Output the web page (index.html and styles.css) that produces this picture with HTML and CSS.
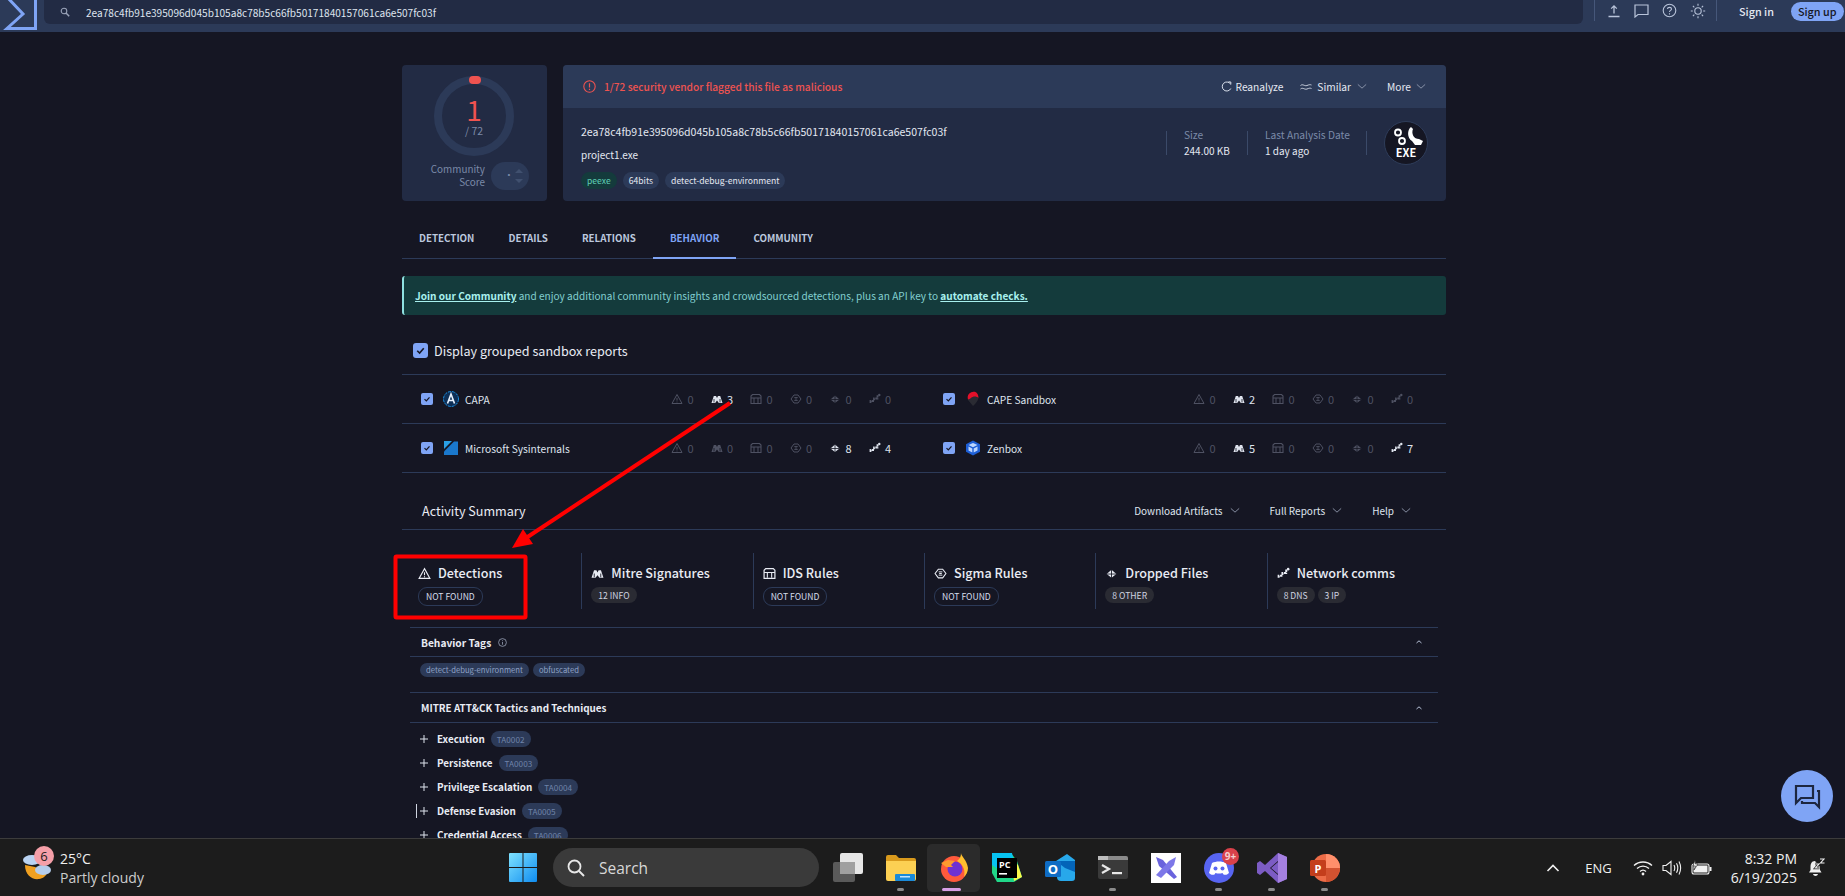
FILE: index.html
```html
<!DOCTYPE html>
<html lang="en">
<head>
<meta charset="utf-8">
<title>VirusTotal - File - 2ea78c4fb91e395096d045b105a8c78b5c66fb50171840157061ca6e507fc03f</title>
<link rel="stylesheet" href="styles.css">
</head>
<body>
<svg class="defs" width="0" height="0">
  <symbol id="i-warn" viewBox="0 0 12 12"><path d="M6 1.500 11 10.500H1Z M6 4.800V7.600 M6 8.600V9.400" fill="none" stroke="currentColor" stroke-width="1"/></symbol>
  <symbol id="i-mitre" viewBox="0 0 12 12"><path d="M.5 10 2.800 3H5L6 5 7 3H9.200L11.500 10H7.800L6 7.500 4.200 10Z" fill="currentColor"/><path d="M3 6V9.500M9 6V9.500" stroke="#151623" stroke-width=".8"/></symbol>
  <symbol id="i-ids" viewBox="0 0 12 12"><path d="M2.500 1.500H9.500L11 3V10.500H1V3Z" fill="none" stroke="currentColor" stroke-width="1.100"/><path d="M1 5H11M4 5V10M8 5V10" stroke="currentColor" stroke-width="1"/></symbol>
  <symbol id="i-sigma" viewBox="0 0 12 12"><path d="M4 2H8L11 6 8 10H4L1 6Z" fill="none" stroke="currentColor" stroke-width="1"/><path d="M4.300 4.500H7.700M4.800 6H7.200M4.300 7.500H7.700" stroke="currentColor" stroke-width=".9"/></symbol>
  <symbol id="i-drop" viewBox="0 0 12 12"><path d="M6 2.500 10.500 6.500 6 10 1.500 6.500Z" fill="currentColor"/><path d="M6 .8V11.300M1.500 6.500H10.500" stroke="#151623" stroke-width=".8"/></symbol>
  <symbol id="i-net" viewBox="0 0 12 12"><path d="M1.500 10V8H5V5.500H8.500V3.200H10" fill="none" stroke="currentColor" stroke-width="1.800" stroke-dasharray="2.400 .7"/><circle cx="10.300" cy="2" r="1.200" fill="currentColor"/></symbol>
  <symbol id="i-check" viewBox="0 0 12 12"><path d="M3 6.200 5.200 8.300 9 4" fill="none" stroke="#151623" stroke-width="1.500"/></symbol>
  <symbol id="i-down" viewBox="0 0 12 8"><path d="M1 1.500 6 6 11 1.500" fill="none" stroke="currentColor" stroke-width="1"/></symbol>
  <symbol id="i-plus" viewBox="0 0 10 10"><path d="M5 1V9M1 5H9" stroke="currentColor" stroke-width="1"/></symbol>
  <symbol id="i-up" viewBox="0 0 8 6"><path d="M1.500 4 4 1.800 6.500 4" fill="none" stroke="currentColor" stroke-width="1"/></symbol>
</svg>

<header class="topbar">
  <a class="logo" href="#"><svg width="37" height="32" viewBox="0 0 37 32"><path d="M7 -3 23 14 7 28.500H35.500V-3" fill="none" stroke="#7fa4f5" stroke-width="3"/></svg></a>
  <div class="search">
    <svg class="search-icon" width="10" height="10" viewBox="0 0 10 10"><circle cx="4" cy="4" r="2.800" fill="none" stroke="#9aa3b8" stroke-width="1.100"/><path d="M6 6 9.200 9.200" stroke="#9aa3b8" stroke-width="1.500"/></svg>
    <span>2ea78c4fb91e395096d045b105a8c78b5c66fb50171840157061ca6e507fc03f</span>
  </div>
  <div class="tools">
    <svg width="14" height="14" viewBox="0 0 14 14"><path d="M7 9.500V2M4.200 4.600 7 1.800 9.800 4.600M1.500 12.500H12.500" fill="none" stroke="#b9c4da" stroke-width="1.300"/></svg>
    <svg width="15" height="14" viewBox="0 0 15 14"><path d="M1 1H14V10.500H4L1 13Z" fill="none" stroke="#b9c4da" stroke-width="1.200"/></svg>
    <svg width="15" height="15" viewBox="0 0 15 15"><circle cx="7.500" cy="7.500" r="6.300" fill="none" stroke="#b9c4da" stroke-width="1.100"/><path d="M5.500 6C5.500 3.800 9.500 3.800 9.500 6 9.500 7.500 7.500 7.300 7.500 9M7.500 10.300V11.400" fill="none" stroke="#b9c4da" stroke-width="1.100"/></svg>
    <svg width="16" height="16" viewBox="0 0 16 16"><circle cx="8" cy="8" r="3.200" fill="none" stroke="#b9c4da" stroke-width="1.100"/><path d="M8 .8V2.800M8 13.200V15.200M.8 8H2.800M13.200 8H15.200M2.900 2.900 4.300 4.300M11.700 11.700 13.100 13.100M2.900 13.100 4.300 11.700M11.700 4.300 13.100 2.900" stroke="#b9c4da" stroke-width="1.100"/></svg>
  </div>
  <a class="sign-in" href="#">Sign in</a>
  <a class="sign-up" href="#">Sign up</a>
</header>

<main class="page">
  <div class="wrap">
    <section class="file-head">
      <div class="score-card">
        <div class="ring">
          <span class="ring-dot"></span>
          <span class="ring-num">1</span>
          <span class="ring-total">/ 72</span>
        </div>
        <div class="community">
          <span>Community<br>Score</span>
          <div class="vote">
            <span class="vote-dot">·</span>
            <svg width="10" height="20" viewBox="0 0 10 20"><path d="M1 7 5 3 9 7Z M1 13 5 17 9 13Z" fill="#40506f"/></svg>
          </div>
        </div>
      </div>
      <div class="info-card">
        <div class="info-top">
          <svg width="13" height="13" viewBox="0 0 13 13"><circle cx="6.500" cy="6.500" r="5.700" fill="none" stroke="#ef5350" stroke-width="1.100"/><path d="M6.500 3.200V7.500M6.500 8.700V9.900" stroke="#ef5350" stroke-width="1.200"/></svg>
          <span class="alert-text">1/72 security vendor flagged this file as malicious</span>
          <div class="actions">
            <span class="action"><svg width="11" height="11" viewBox="0 0 11 11"><path d="M9.500 3A4.500 4.500 0 1 0 9.800 7.500" fill="none" stroke="#d8deea" stroke-width="1"/><path d="M7.500 .8 9.800 1V3.500" fill="none" stroke="#d8deea" stroke-width="1"/></svg>Reanalyze</span>
            <span class="action action-similar"><svg width="12" height="8" viewBox="0 0 12 8"><path d="M.5 2.500C3 .5 4.500 3.500 7 2.500S10 1.500 11.500 2M.5 6C3 4 4.500 7 7 6S10 5 11.500 5.500" fill="none" stroke="#d8deea" stroke-width=".9"/></svg>Similar<svg class="chev" width="10" height="7"><use href="#i-down"/></svg></span>
            <span class="action">More<svg class="chev" width="10" height="7"><use href="#i-down"/></svg></span>
          </div>
        </div>
        <div class="info-body">
          <div class="file-id">
            <div class="hash">2ea78c4fb91e395096d045b105a8c78b5c66fb50171840157061ca6e507fc03f</div>
            <div class="filename">project1.exe</div>
            <div class="file-tags">
              <span class="tag tag-green">peexe</span>
              <span class="tag">64bits</span>
              <span class="tag">detect-debug-environment</span>
            </div>
          </div>
          <div class="meta meta-size"><span class="meta-label">Size</span><span class="meta-value">244.00 KB</span></div>
          <div class="meta meta-date"><span class="meta-label">Last Analysis Date</span><span class="meta-value">1 day ago</span></div>
          <div class="meta-end"></div>
          <div class="file-type">
            <svg width="44" height="44" viewBox="0 0 44 44">
              <circle cx="22" cy="22" r="21.500" fill="#151623" stroke="#2f3d5a"/>
              <circle cx="14" cy="11.500" r="3" fill="none" stroke="#fff" stroke-width="1.800"/>
              <circle cx="18" cy="20" r="3" fill="none" stroke="#fff" stroke-width="1.800"/>
              <path d="M27 6C23 9 23 17 28 20L31 24 37 24 39 20 35 18C30 18 27 13 29 8Z" fill="#fff"/>
              <text x="22" y="36" text-anchor="middle" class="exe-text">EXE</text>
            </svg>
          </div>
        </div>
      </div>
    </section>

    <nav class="tabs">
      <a href="#">Detection</a>
      <a href="#">Details</a>
      <a href="#">Relations</a>
      <a href="#" class="active">Behavior</a>
      <a href="#">Community</a>
    </nav>

    <div class="banner"><a href="#">Join our Community</a> and enjoy additional community insights and crowdsourced detections, plus an API key to <a href="#">automate checks.</a></div>

    <label class="group-toggle"><span class="check check-lg"><svg width="13" height="13"><use href="#i-check"/></svg></span>Display grouped sandbox reports</label>

    <div class="sandboxes">
      <div class="sandbox">
        <span class="check"><svg width="10" height="10"><use href="#i-check"/></svg></span>
        <svg class="sb-logo" width="16" height="16" viewBox="0 0 16 16"><circle cx="8" cy="8" r="7.500" fill="#0d2f57" stroke="#1b8ee0" stroke-dasharray="3 1"/><path d="M4.500 12.500 8 3 11.500 12.500M6 9.500H10" fill="none" stroke="#e8f2ff" stroke-width="1.600"/></svg>
        <span class="sb-name">CAPA</span>
        <div class="stats">
          <span class="stat"><svg><use href="#i-warn"/></svg>0</span>
          <span class="stat on"><svg><use href="#i-mitre"/></svg>3</span>
          <span class="stat"><svg><use href="#i-ids"/></svg>0</span>
          <span class="stat"><svg><use href="#i-sigma"/></svg>0</span>
          <span class="stat"><svg><use href="#i-drop"/></svg>0</span>
          <span class="stat"><svg><use href="#i-net"/></svg>0</span>
        </div>
      </div>
      <div class="sandbox">
        <span class="check"><svg width="10" height="10"><use href="#i-check"/></svg></span>
        <svg class="sb-logo" width="16" height="16" viewBox="0 0 16 16"><path d="M8 15 3 9A6 6 0 0 1 13.500 7C13 10 11 12 8 15Z" fill="#2a2b33"/><path d="M3 8.500A6 6 0 0 1 10 .8C12.500 2 13.500 4 13.500 7 11.500 5 8 5 6 7 5 7.800 4 8.200 3 8.500Z" fill="#e3102a"/></svg>
        <span class="sb-name">CAPE Sandbox</span>
        <div class="stats">
          <span class="stat"><svg><use href="#i-warn"/></svg>0</span>
          <span class="stat on"><svg><use href="#i-mitre"/></svg>2</span>
          <span class="stat"><svg><use href="#i-ids"/></svg>0</span>
          <span class="stat"><svg><use href="#i-sigma"/></svg>0</span>
          <span class="stat"><svg><use href="#i-drop"/></svg>0</span>
          <span class="stat"><svg><use href="#i-net"/></svg>0</span>
        </div>
      </div>
      <div class="sandbox">
        <span class="check"><svg width="10" height="10"><use href="#i-check"/></svg></span>
        <svg class="sb-logo" width="16" height="16" viewBox="0 0 16 16"><path d="M1 1H9L1 9Z" fill="#2aa0e6"/><path d="M11 1.500H15V15H1V11.500Z" fill="#1a78cc"/></svg>
        <span class="sb-name">Microsoft Sysinternals</span>
        <div class="stats">
          <span class="stat"><svg><use href="#i-warn"/></svg>0</span>
          <span class="stat"><svg><use href="#i-mitre"/></svg>0</span>
          <span class="stat"><svg><use href="#i-ids"/></svg>0</span>
          <span class="stat"><svg><use href="#i-sigma"/></svg>0</span>
          <span class="stat on"><svg><use href="#i-drop"/></svg>8</span>
          <span class="stat on"><svg><use href="#i-net"/></svg>4</span>
        </div>
      </div>
      <div class="sandbox">
        <span class="check"><svg width="10" height="10"><use href="#i-check"/></svg></span>
        <svg class="sb-logo" width="16" height="16" viewBox="0 0 16 16"><path d="M8 .500 15 4.200V11.800L8 15.500 1 11.800V4.200Z" fill="#1d5fd6"/><path d="M3.500 5 8 7.200 12.500 5 8 3ZM3.500 6.500 7.300 8.500V12.500L3.500 10.500ZM12.500 6.500 8.700 8.500V12.500L12.500 10.500Z" fill="#bcd6ff"/></svg>
        <span class="sb-name">Zenbox</span>
        <div class="stats">
          <span class="stat"><svg><use href="#i-warn"/></svg>0</span>
          <span class="stat on"><svg><use href="#i-mitre"/></svg>5</span>
          <span class="stat"><svg><use href="#i-ids"/></svg>0</span>
          <span class="stat"><svg><use href="#i-sigma"/></svg>0</span>
          <span class="stat"><svg><use href="#i-drop"/></svg>0</span>
          <span class="stat on"><svg><use href="#i-net"/></svg>7</span>
        </div>
      </div>
    </div>

    <div class="activity-head">
      <h2>Activity Summary</h2>
      <div class="activity-menus">
        <span>Download Artifacts<svg width="10" height="7"><use href="#i-down"/></svg></span>
        <span>Full Reports<svg width="10" height="7"><use href="#i-down"/></svg></span>
        <span>Help<svg width="10" height="7"><use href="#i-down"/></svg></span>
      </div>
    </div>

    <div class="inner">
      <div class="summary">
        <div class="sum-col">
          <h3><svg width="13" height="13"><use href="#i-warn"/></svg>Detections</h3>
          <div class="pills"><span class="pill pill-line">NOT FOUND</span></div>
        </div>
        <div class="sum-col">
          <h3><svg width="13" height="13"><use href="#i-mitre"/></svg>Mitre Signatures</h3>
          <div class="pills"><span class="pill">12 INFO</span></div>
        </div>
        <div class="sum-col">
          <h3><svg width="13" height="13"><use href="#i-ids"/></svg>IDS Rules</h3>
          <div class="pills"><span class="pill pill-line">NOT FOUND</span></div>
        </div>
        <div class="sum-col">
          <h3><svg width="13" height="13"><use href="#i-sigma"/></svg>Sigma Rules</h3>
          <div class="pills"><span class="pill pill-line">NOT FOUND</span></div>
        </div>
        <div class="sum-col">
          <h3><svg width="13" height="13"><use href="#i-drop"/></svg>Dropped Files</h3>
          <div class="pills"><span class="pill">8 OTHER</span></div>
        </div>
        <div class="sum-col">
          <h3><svg width="13" height="13"><use href="#i-net"/></svg>Network comms</h3>
          <div class="pills"><span class="pill">8 DNS</span><span class="pill">3 IP</span></div>
        </div>
      </div>

      <div class="sec-head">
        <span>Behavior Tags</span>
        <svg class="sec-info" width="9" height="9" viewBox="0 0 9 9"><circle cx="4.500" cy="4.500" r="3.900" fill="none" stroke="#9aa3b8" stroke-width=".8"/><path d="M4.500 4V6.700M4.500 2.300V3.200" stroke="#9aa3b8" stroke-width=".8"/></svg>
        <svg class="sec-up" width="8" height="6"><use href="#i-up"/></svg>
      </div>
      <div class="behav-tags">
        <span>detect-debug-environment</span>
        <span>obfuscated</span>
      </div>

      <div class="sec-head sec-mitre">
        <span>MITRE ATT&amp;CK Tactics and Techniques</span>
        <svg class="sec-up" width="8" height="6"><use href="#i-up"/></svg>
      </div>
      <ul class="tactics">
        <li><svg width="10" height="10"><use href="#i-plus"/></svg><b>Execution</b><span>TA0002</span></li>
        <li><svg width="10" height="10"><use href="#i-plus"/></svg><b>Persistence</b><span>TA0003</span></li>
        <li><svg width="10" height="10"><use href="#i-plus"/></svg><b>Privilege Escalation</b><span>TA0004</span></li>
        <li class="caret"><svg width="10" height="10"><use href="#i-plus"/></svg><b>Defense Evasion</b><span>TA0005</span></li>
        <li><svg width="10" height="10"><use href="#i-plus"/></svg><b>Credential Access</b><span>TA0006</span></li>
      </ul>
    </div>
  </div>
</main>

<footer class="taskbar">
  <div class="weather">
    <svg width="30" height="34" viewBox="0 0 30 34">
      <ellipse cx="10" cy="9" rx="9" ry="5" fill="#b9d3f2"/>
      <path d="M3 14C3 24 10 29 17 28 21 27.500 24 25 25 22L13 16Z" fill="#f0a020"/>
      <ellipse cx="21" cy="19" rx="8" ry="5" fill="#b4cdec"/>
    </svg>
    <span class="weather-badge">6</span>
    <div class="weather-text"><span>25°C</span><span class="dim">Partly cloudy</span></div>
  </div>
  <svg class="win" width="28" height="29" viewBox="0 0 28 29"><defs><linearGradient id="wg" x1="0" y1="0" x2="1" y2="1"><stop offset="0" stop-color="#7fe3ff"/><stop offset="1" stop-color="#0f8cf0"/></linearGradient></defs><path d="M0 1a1 1 0 0 1 1-1H13.500V14H0ZM14.500 0H27a1 1 0 0 1 1 1V14H14.500ZM0 15H13.500V29H1a1 1 0 0 1-1-1ZM14.500 15H28V28a1 1 0 0 1-1 1H14.500Z" fill="url(#wg)"/></svg>
  <div class="task-search">
    <svg width="20" height="20" viewBox="0 0 20 20"><circle cx="8.500" cy="8.500" r="6" fill="none" stroke="#e8e8e8" stroke-width="1.800"/><path d="M13 13 18 18" stroke="#e8e8e8" stroke-width="2"/></svg>
    <span>Search</span>
  </div>
  <div class="tasks">
    <div class="task"><svg width="30" height="29" viewBox="0 0 30 29"><rect x="0" y="9" width="22" height="20" rx="2" fill="#5a5a5a"/><rect x="7" y="0" width="23" height="21" rx="2" fill="#e6e6e6"/><rect x="7" y="9" width="15" height="12" fill="#a0a0a0"/></svg></div>
    <div class="task open"><svg width="30" height="27" viewBox="0 0 30 27"><path d="M0 3a2 2 0 0 1 2-2H10L13 4H28a2 2 0 0 1 2 2V8H0Z" fill="#d99a1c"/><path d="M0 7H30V25a2 2 0 0 1-2 2H2a2 2 0 0 1-2-2Z" fill="#fcd053"/><rect x="9" y="20" width="20" height="7" rx="1" fill="#1a8ad8"/><rect x="14" y="22" width="10" height="1.500" fill="#bfe3ff"/></svg></div>
    <div class="task active"><svg width="28" height="29" viewBox="0 0 28 29"><circle cx="14" cy="16" r="13" fill="#ff5a3c"/><path d="M21 0C21 3 27 7 28 15 28 19 26 22 24 24 26 15 21 10 17 8 20 6 21 3 21 0Z" fill="#ffc02e"/><circle cx="15" cy="16" r="7.500" fill="#6f32d2"/><path d="M1 10 8 7 15 8 11 12 13 14 6 14Z" fill="#ff9a2e"/></svg></div>
    <div class="task"><svg width="30" height="30" viewBox="0 0 30 30"><path d="M0 0H19L25 8 30 24 22 29 5 29 0 20Z" fill="#21d789"/><path d="M0 0H20L22 10 6 16 0 12Z" fill="#07c3f2"/><path d="M19 5 26 12 30 24 22 28Z" fill="#fcf84a"/><rect x="5" y="5" width="20" height="20" fill="#000"/><text x="7" y="15" class="pc-text">PC</text><rect x="7" y="20" width="8" height="1.600" fill="#fff"/></svg></div>
    <div class="task"><svg width="30" height="28" viewBox="0 0 30 28"><path d="M11 7 22 0 30 6V24a3 3 0 0 1-3 3H16a4 4 0 0 1-4-4Z" fill="#28a8ea"/><path d="M11 7H30V18L20 14Z" fill="#0364b8"/><rect x="0" y="7" width="16" height="16" rx="1.500" fill="#0f6cc4"/><text x="8" y="20" text-anchor="middle" class="o-text">O</text></svg></div>
    <div class="task open"><svg width="30" height="23" viewBox="0 0 30 23"><rect width="30" height="23" rx="2" fill="#3a3a3a"/><path d="M0 2a2 2 0 0 1 2-2H28a2 2 0 0 1 2 2V4H0Z" fill="#8a8a8a"/><rect x="0" y="0" width="10" height="4" fill="#bdbdbd"/><path d="M4 9 11 13 4 17" fill="none" stroke="#e8e8e8" stroke-width="2.200"/><rect x="14" y="16" width="10" height="2.200" fill="#e8e8e8"/></svg></div>
    <div class="task"><svg width="30" height="30" viewBox="0 0 30 30"><rect width="30" height="30" fill="#fff"/><path d="M5 4 12 7 26 24 23 26 8 13Z" fill="#6a63dd"/><path d="M25 4 23 12 10 25 5 22 18 8Z" fill="#7d77e8"/></svg></div>
    <div class="task open"><svg width="30" height="30" viewBox="0 0 30 30"><circle cx="15" cy="15" r="15" fill="#5865f2"/><path d="M8 10C12 8 18 8 22 10L25 20C23 22 21 22 19.500 21.500L18.500 20C16 20.700 14 20.700 11.500 20L10.500 21.500C9 22 7 22 5 20Z" fill="#fff"/><circle cx="11.500" cy="15.500" r="2" fill="#5865f2"/><circle cx="18.500" cy="15.500" r="2" fill="#5865f2"/></svg><span class="task-badge">9+</span></div>
    <div class="task open"><svg width="30" height="30" viewBox="0 0 30 30"><path d="M21 0 30 4V26L21 30 8 18 3 22 0 20V10L3 8 8 12Z" fill="#7c5cc4"/><path d="M21 8 13 15 21 22Z" fill="#151515"/><path d="M21 0 30 4V26L21 30Z" fill="#a580e0"/><path d="M21 9 14 15 21 21Z" fill="#7c5cc4"/></svg></div>
    <div class="task open"><svg width="30" height="28" viewBox="0 0 30 28"><circle cx="16" cy="14" r="14" fill="#ed6c47"/><path d="M16 0A14 14 0 0 1 30 14H16Z" fill="#ff8f6b"/><path d="M16 14H30A14 14 0 0 1 16 28Z" fill="#d35230"/><rect x="0" y="6" width="16" height="16" rx="1.500" fill="#c43e1c"/><text x="8" y="18.500" text-anchor="middle" class="p-text">P</text></svg></div>
  </div>
  <div class="tray">
    <svg width="14" height="8" viewBox="0 0 14 8"><path d="M1.500 7 7 1.500 12.500 7" fill="none" stroke="#f0f0f0" stroke-width="1.600"/></svg>
    <span class="lang">ENG</span>
    <div class="tray-icons">
      <svg width="20" height="16" viewBox="0 0 20 16"><path d="M1 5.500C6 .8 14 .8 19 5.500M4 8.500C7.500 5.200 12.500 5.200 16 8.500M7 11.500C8.800 9.800 11.200 9.800 13 11.500" fill="none" stroke="#f0f0f0" stroke-width="1.300"/><circle cx="10" cy="14" r="1.400" fill="#f0f0f0"/></svg>
      <svg width="20" height="16" viewBox="0 0 20 16"><path d="M1 5.500H4L9 1.500V14.500L4 10.500H1Z" fill="none" stroke="#f0f0f0" stroke-width="1.100"/><path d="M12 5C13 7 13 9 12 11M14.500 3.200C16 6 16 10 14.500 12.800M17 1.500C19 5.500 19 10.500 17 14.500" fill="none" stroke="#f0f0f0" stroke-width="1.100"/></svg>
      <svg width="21" height="16" viewBox="0 0 21 16"><rect x="1" y="4" width="17" height="10" rx="2" fill="none" stroke="#f0f0f0" stroke-width="1.100"/><rect x="2.500" y="5.500" width="14" height="7" fill="#f0f0f0"/><rect x="18.500" y="7" width="2" height="4" fill="#f0f0f0"/><path d="M4 0 2 6H4.500L3 10 7 4H4.500Z" fill="#f0f0f0" stroke="#1c1c1c" stroke-width=".6"/></svg>
    </div>
    <div class="clock"><span>8:32 PM</span><span>6/19/2025</span></div>
    <svg class="bell" width="18" height="20" viewBox="0 0 18 20"><path d="M8 3C4.500 3 3.500 6 3.500 9V12L2 14.500H14.500L13 12V9" fill="#f0f0f0"/><path d="M6 16H11C10.500 18.500 6.500 18.500 6 16Z" fill="#f0f0f0"/><path d="M8 6H12L8.500 10H12.500M13 1H17L13.500 5H17.500" fill="none" stroke="#1c1c1c" stroke-width="2.400"/><path d="M8 6H12L8.500 10H12.500M13 1H17L13.500 5H17.500" fill="none" stroke="#f0f0f0" stroke-width="1.100"/></svg>
  </div>
</footer>

<button class="chat-fab">
  <svg width="27" height="27" viewBox="0 0 27 27"><path d="M2 3H19V15H7L2 20Z" fill="none" stroke="#1d2740" stroke-width="2.200"/><path d="M23 8H25V24L21 20H8V18" fill="none" stroke="#1d2740" stroke-width="2.200"/></svg>
</button>

<svg class="markup" width="1845" height="896" viewBox="0 0 1845 896">
  <rect x="395.500" y="556.500" width="130" height="61" rx="1" fill="none" stroke="#f00" stroke-width="4"/>
  <path d="M730 403 526 538" stroke="#f00" stroke-width="4"/>
  <path d="M512 548 533 544 523 529Z" fill="#f00"/>
</svg>
</body>
</html>
```

FILE: styles.css
```css
*{ margin:0; padding:0; box-sizing:border-box;}
html,body{ height:100%;}
body{ display:flex; flex-direction:column; height:100vh; overflow:hidden; background:#151623; color:#e4e8f1; font-family:"Noto Sans CJK SC","Noto Sans",sans-serif; font-size:10.2px; position:relative;}
a{ color:inherit; text-decoration:none;}
svg{ display:block; flex:none;}
.defs{ position:absolute;}

/* top bar */
.topbar{ display:flex; flex:none; height:32px; background:#2c3a58; white-space:nowrap;}
.logo{ width:37px; height:32px;}
.search{ display:flex; flex:none; align-items:center; width:1539px; height:24px; margin-left:7px; padding-left:16px; background:#222b44; border-radius:0 0 6px 6px; color:#dfe4ee; font-size:10.1px;}
.search-icon{ margin-right:16px;}
.tools{ display:flex; flex:none; align-items:center; justify-content:space-between; width:123px; height:21px; margin:0 0 0 11px; padding:0 10px 0 12px; border-left:1px solid #46577a; border-right:1px solid #46577a;}
.sign-in{ margin:0 17px 0 22px; line-height:23px; color:#e4e8f1; font-size:10.8px; font-weight:500;}
.sign-up{ height:19px; margin-top:2px; padding:0 7px; background:#7fa4f5; border-radius:10px; color:#151623; font-size:10.8px; font-weight:500; line-height:19px;}

/* page */
.page{ flex:1; min-height:0; overflow:hidden; padding:33px 0 0 402px;}
.wrap{ width:1044px;}

.file-head{ display:flex; gap:16px; height:136px;}
.score-card{ width:145px; padding-top:11px; background:#222b44; border-radius:4px;}
.ring{ position:relative; width:80px; height:80px; margin:0 auto 0 32px; border:8px solid #2c3a58; border-radius:50%; display:flex; flex-direction:column; align-items:center;}
.ring-dot{ position:absolute; top:-8px; left:27px; width:12px; height:8px; background:#ef5350; border-radius:4px;}
.ring-num{ margin-top:13px; color:#ef5350; font-size:28px; line-height:24px;}
.ring-total{ margin-top:3px; color:#7b8aa8; font-size:10.5px; line-height:13px;}
.community{ display:flex; align-items:center; justify-content:flex-end; gap:6px; margin-top:6px; padding-right:18px; color:#7b8aa8; font-size:9.9px; text-align:right; line-height:13.500px;}
.vote{ display:flex; align-items:center; justify-content:space-between; width:38px; height:28px; padding:0 6px 0 13px; background:#2c3a58; border-radius:14px;}
.vote-dot{ color:#7b8aa8;}

.info-card{ flex:1; background:#222b44; border-radius:4px; overflow:hidden;}
.info-top{ display:flex; align-items:center; height:43px; padding:0 20px; background:#2c3a58;}
.alert-text{ margin-left:8px; color:#ef5350; font-size:10.2px; font-weight:500;}
.actions{ display:flex; align-items:center; margin-left:auto; color:#e4e8f1;}
.action{ display:flex; align-items:center; gap:4px; margin-left:20px;}
.action-similar{ gap:5px; margin-left:17px;}
.chev{ margin-left:1px; color:#9aa3b8;}
.info-body{ display:flex; height:93px;}
.file-id{ flex:1; padding:15px 0 0 18px;}
.hash{ line-height:18px; font-size:10.55px;}
.filename{ margin-top:5px; line-height:18px; font-size:10px;}
.file-tags{ display:flex; gap:6px; margin-top:8px;}
.tag{ height:17px; padding:0 6px; background:#2c3a58; border-radius:9px; font-size:8.6px; line-height:17px;}
.tag-green{ background:#143b3c; color:#5fd0b5;}
.meta{ display:flex; flex-direction:column; height:24px; margin-top:23px; padding-left:17px; border-left:1px solid #3b4a69;}
.meta-size{ width:81px;}
.meta-date{ width:119px;}
.meta-end{ width:1px; height:24px; margin-top:23px; background:#3b4a69;}
.meta-label{ color:#7b8aa8; line-height:14px; margin-top:-3px;}
.meta-value{ line-height:16px; margin-top:1px; font-size:10px;}
.file-type{ width:79px; padding:13px 0 0 17px;}
.exe-text{ fill:#fff; font-size:11px; font-weight:700;}

.tabs{ display:flex; height:41px; margin-top:17px; border-bottom:1px solid #2c3a58;}
.tabs a{ padding:0 17px; font-size:9.75px; font-weight:700; line-height:40px; text-transform:uppercase; color:#bcc8de;}
.tabs .active{ color:#7fa4f5; border-bottom:2px solid #7fa4f5; height:41px;}

.banner{ height:39px; margin-top:17px; padding-left:11px; background:#143b3c; border-left:2px solid #8fe0e0; border-radius:3px; color:#82cfcf; font-size:10.07px; line-height:39px;}
.banner a{ color:#a8f0ee; font-weight:700; text-decoration:underline;}

.group-toggle{ display:flex; align-items:center; gap:6px; height:59px; padding:12px 0 0 11px; font-size:12.6px; color:#e9ecf4;}
.check{ display:flex; align-items:center; justify-content:center; width:12px; height:12px; background:#7fa4f5; border-radius:2px;}
.check-lg{ width:15px; height:15px; border-radius:3px;}

.sandboxes{ display:grid; grid-template-columns:522px 522px; border-top:1px solid #2c3a58;}
.sandbox{ display:flex; align-items:center; height:49px; padding:0 33px 0 19px; border-bottom:1px solid #2c3a58;}
.sb-logo{ margin-left:10px;}
.sb-name{ margin-left:6px; font-size:10.2px; color:#dfe4ee;}
.stats{ display:flex; margin-left:auto;}
.stat{ display:flex; align-items:center; justify-content:flex-end; gap:4px; width:39.500px; color:#4e5162; font-size:11px;}
.stat svg{ width:12px; height:12px;}
.stat.on{ color:#dfe4ee;}

.activity-head{ display:flex; align-items:center; height:57px; padding:18px 35px 0 20px; border-bottom:1px solid #2c3a58;}
.activity-head h2{ font-size:12.6px; font-weight:400; color:#e9ecf4;}
.activity-menus{ display:flex; gap:30px; margin-left:auto; color:#dfe4ee; font-size:10px;}
.activity-menus span{ display:flex; align-items:center; gap:7px;}
.activity-menus svg{ color:#9aa3b8;}

.inner{ margin:0 8px;}
.summary{ display:grid; grid-template-columns:repeat(6,1fr); height:56px; margin:23px 0 18px;}
.sum-col{ padding:0 0 0 9px; border-left:1px solid #2c3a58;}
.sum-col:first-child{ padding-left:8px; border-left:0;}
.sum-col h3{ display:flex; align-items:center; gap:7px; font-size:12.6px; font-weight:500; line-height:20px; color:#e9ecf4; margin-top:10px;}
.pills{ display:flex; gap:3px; margin-top:4px;}
.pill{ height:16px; padding:0 7px; background:#2a2b33; border-radius:9px; color:#cfd4e0; font-size:8.6px; line-height:16px;}
.pill-line{ height:19px; background:none; border:1px solid #2c3a58; line-height:17px; color:#d5ddec;}

.sec-head{ display:flex; align-items:center; height:30px; padding:0 15px 0 11px; border-top:1px solid #2c3a58; border-bottom:1px solid #2c3a58; font-size:10.2px; font-weight:700; color:#e9ecf4;}
.sec-mitre{ height:31px; font-size:9.9px;}
.sec-info{ margin-left:7px;}
.sec-up{ margin-left:auto; color:#b9c4da;}
.behav-tags{ display:flex; gap:4px; height:35px; padding:6px 0 0 10px;}
.behav-tags span{ height:14px; padding:0 6px; background:#2c3a58; border-radius:7px; color:#8fa2c6; font-size:7.7px; line-height:14px;}
.tactics{ list-style:none; padding:4px 0 0 9px;}
.tactics li{ position:relative; display:flex; align-items:center; height:24px; font-size:9.9px;}
.tactics b{ margin-left:8px; font-weight:700; color:#e9ecf4;}
.tactics span{ height:16px; margin-left:6px; padding:0 6px; background:#2c3a58; border-radius:8px; color:#6f83a8; font-size:8.2px; line-height:16px;}
.tactics svg{ color:#dfe4ee;}
.caret::before{ content:""; position:absolute; left:-3px; top:5px; width:1px; height:14px; background:#cfd4e0;}

/* windows taskbar */
.taskbar{ position:relative; z-index:2; display:flex; align-items:center; flex:none; height:58px; padding-left:22px; background:#1c1c1c; border-top:1px solid #3c3c3c; color:#f0f0f0; font-family:"Open Sans","Noto Sans",sans-serif;}
.weather{ position:relative; display:flex; align-items:center; gap:8px; width:487px;}
.weather-badge{ position:absolute; left:12px; top:-3px; width:20px; height:20px; background:#f59fa8; border-radius:50%; color:#1c1c1c; font-size:13px; line-height:20px; text-align:center;}
.weather-text{ display:flex; flex-direction:column; font-size:14px; line-height:19px;}
.dim{ color:#cdcdcd;}
.task-search{ display:flex; align-items:center; gap:13px; width:266px; height:39px; margin-left:16px; padding-left:13px; background:#3a3a3a; border-radius:20px; color:#d8d8d8; font-size:15.500px;}
.tasks{ display:flex; margin-left:2px;}
.task{ position:relative; display:flex; align-items:center; justify-content:center; width:53px; height:48px; border-radius:5px;}
.task.open::after,.task.active::after{ content:""; position:absolute; left:23px; bottom:1px; width:7px; height:3px; background:#8a8a8a; border-radius:2px;}
.task.active{ background:#2b2b2b;}
.task.active::after{ left:15px; width:19px; background:#d7a0e6;}
.task-badge{ position:absolute; left:30px; top:4px; width:17px; height:17px; background:#d9414a; border-radius:50%; color:#f4d0d0; font-size:10px; font-weight:700; line-height:17px; text-align:center;}
.pc-text{ fill:#fff; font-family:"Open Sans",sans-serif; font-size:9px; font-weight:700;}
.o-text{ fill:#fff; font-family:"Open Sans",sans-serif; font-size:13px; font-weight:700;}
.p-text{ fill:#fff; font-family:"Open Sans",sans-serif; font-size:11px; font-weight:700;}
.tray{ display:flex; align-items:center; margin-left:auto; padding-right:20px;}
.lang{ margin-left:25px; font-size:13px;}
.tray-icons{ display:flex; gap:9px; margin-left:21px;}
.clock{ display:flex; flex-direction:column; align-items:flex-end; margin-left:19px; font-size:14px; line-height:19px;}
.bell{ margin-left:10px;}

/* things lying over the page */
.chat-fab{ position:absolute; left:1781px; top:770px; display:flex; align-items:center; justify-content:center; width:52px; height:52px; background:#7fa4f5; border:0; border-radius:50%;}
.markup{ position:absolute; left:0; top:0; pointer-events:none;}
```
